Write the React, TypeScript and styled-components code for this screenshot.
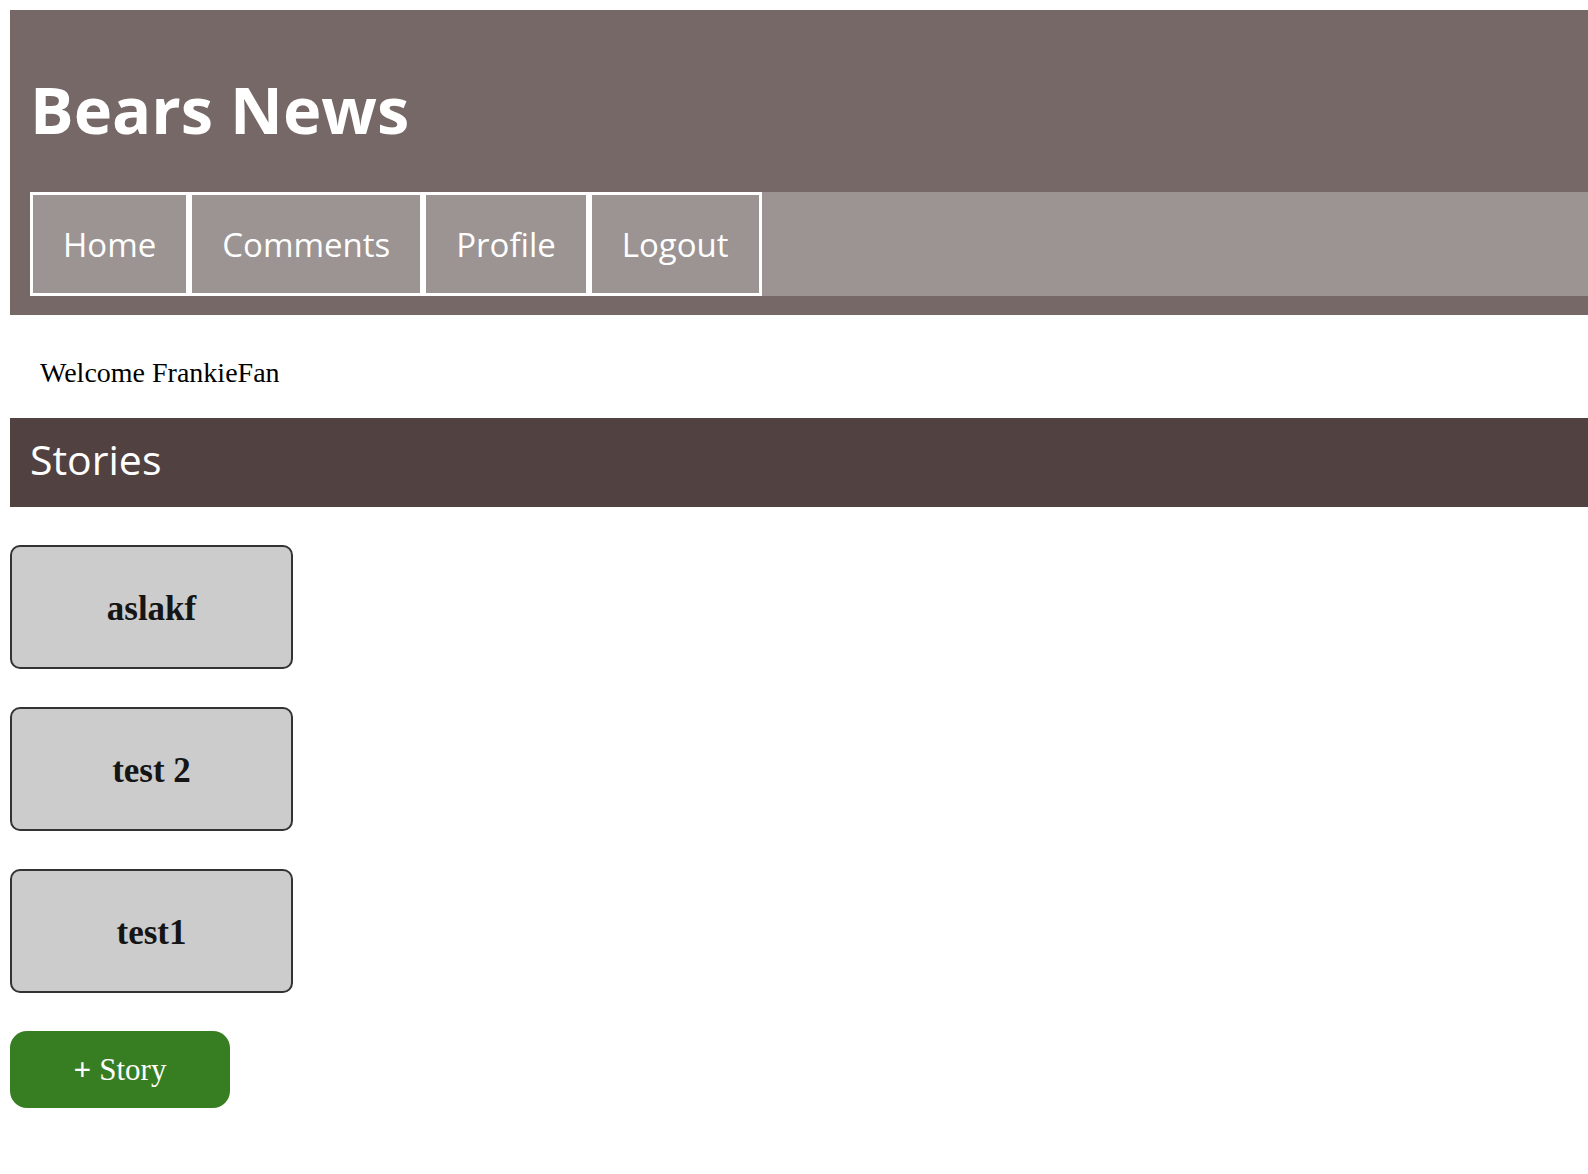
import React from "react";
import styled, { createGlobalStyle } from "styled-components";

const GlobalStyle = createGlobalStyle`
  html, body { background: #ffffff; }
  body {
    margin: 10px 0 0 10px;
    font-family: "Liberation Serif", "Times New Roman", serif;
    color: #000;
  }
  * { box-sizing: border-box; }
`;

const Page = styled.div`
  display: flex;
  flex-direction: column;
`;

const Header = styled.header`
  background: #756866;
  padding: 0 0 19px 20px;
`;

const Title = styled.h1`
  margin: 0 0 37px;
  padding-top: 54px;
  font-family: "Open Sans", "Noto Sans", sans-serif;
  font-weight: 700;
  font-size: 65px;
  line-height: 91px;
  color: #ffffff;
`;

const Nav = styled.nav`
  display: flex;
  background: #9b9493;
`;

const NavItem = styled.a`
  display: flex;
  align-items: center;
  height: 104px;
  padding: 0 30px;
  border: 3px solid #ffffff;
  font-family: "Open Sans", "Noto Sans", sans-serif;
  font-size: 33px;
  color: #ffffff;
  text-decoration: none;
`;

const Welcome = styled.p`
  margin: 0;
  padding: 42px 0 29px 30px;
  font-size: 28px;
  line-height: 32px;
`;

const SectionBar = styled.div`
  background: #514241;
  padding: 15px 20px 21px;
`;

const SectionTitle = styled.h2`
  margin: 0;
  font-family: "Open Sans", "Noto Sans", sans-serif;
  font-weight: 400;
  font-size: 41px;
  line-height: 53px;
  color: #ffffff;
`;

const StoryList = styled.div`
  display: flex;
  flex-direction: column;
  align-items: flex-start;
  gap: 38px;
  padding-top: 38px;
  padding-bottom: 60px;
`;

const StoryCard = styled.div`
  display: flex;
  align-items: center;
  justify-content: center;
  width: 283px;
  height: 124px;
  padding-top: 4px;
  background: #cccccc;
  border: 2px solid #333333;
  border-radius: 10px;
  font-weight: 700;
  font-size: 35px;
  color: #151515;
`;

const AddButton = styled.button`
  display: flex;
  align-items: center;
  justify-content: center;
  gap: 8px;
  width: 220px;
  height: 77px;
  border: none;
  border-radius: 17px;
  background: #377e22;
  color: #ffffff;
  font-family: "Liberation Serif", "Times New Roman", serif;
  font-size: 31px;
  cursor: pointer;
`;

const Plus = styled.span`
  font-weight: 700;
`;

const navLinks = ["Home", "Comments", "Profile", "Logout"];
const stories = ["aslakf", "test 2", "test1"];

export default function App() {
  return (
    <Page>
      <GlobalStyle />
      <Header>
        <Title>Bears News</Title>
        <Nav>
          {navLinks.map((l) => (
            <NavItem key={l} href="#">
              {l}
            </NavItem>
          ))}
        </Nav>
      </Header>
      <Welcome>Welcome FrankieFan</Welcome>
      <SectionBar>
        <SectionTitle>Stories</SectionTitle>
      </SectionBar>
      <StoryList>
        {stories.map((s) => (
          <StoryCard key={s}>{s}</StoryCard>
        ))}
        <AddButton>
          <Plus>+</Plus>
          <span>Story</span>
        </AddButton>
      </StoryList>
    </Page>
  );
}
